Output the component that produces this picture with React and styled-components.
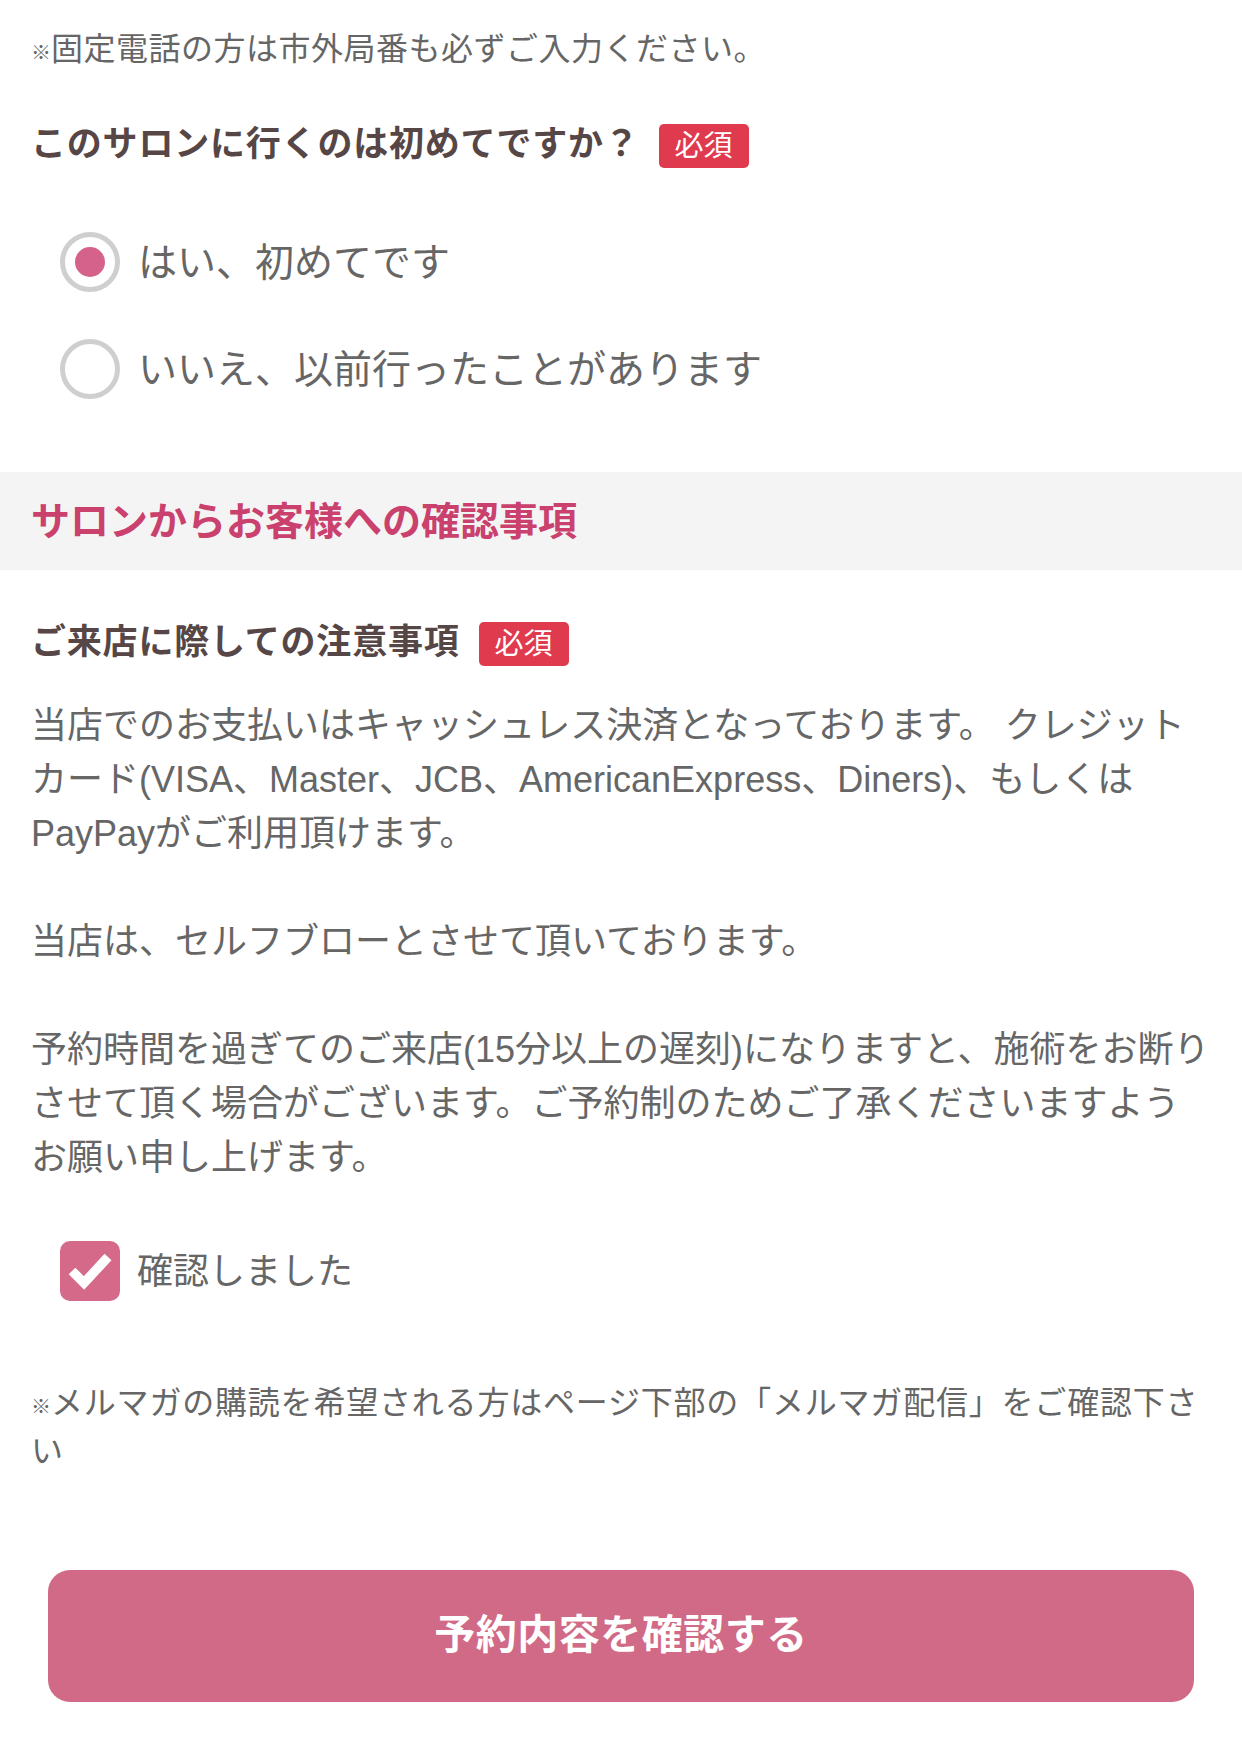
import React from 'react';
import styled, { createGlobalStyle } from 'styled-components';

const GlobalStyle = createGlobalStyle`
  html, body {
    margin: 0;
    padding: 0;
    background: #ffffff;
  }
  body {
    font-family: "Liberation Sans", "Noto Sans CJK JP", sans-serif;
    color: #666666;
  }
  * {
    box-sizing: border-box;
  }
`;

const Page = styled.div`
  width: 1242px;
  padding-bottom: 50px;
`;

const Section = styled.div`
  padding: 0 31px;
`;

const Note = styled.p`
  margin: ${(p) => p.$top || 0}px 0 0;
  font-size: 32px;
  line-height: 48px;
  letter-spacing: ${(p) => p.$spacing || 0.5}px;
  color: #666666;
  white-space: nowrap;
`;

// the reference mark is drawn small, like a latin glyph
const Mark = styled.span`
  font-size: 20px;
  line-height: 1;
  letter-spacing: 0;
`;

const QuestionRow = styled.div`
  display: flex;
  align-items: center;
  gap: 19px;
  height: 44px;
  margin-top: ${(p) => p.$top}px;
`;

const QuestionTitle = styled.h3`
  margin: 0;
  padding-bottom: 4px;
  font-size: 35px;
  line-height: 44px;
  letter-spacing: 0.8px;
  font-weight: 700;
  color: #574646;
`;

const Badge = styled.span`
  display: inline-flex;
  align-items: center;
  justify-content: center;
  height: 44px;
  padding: 0 16px;
  border-radius: 5px;
  background: #e03a4f;
  color: #ffffff;
  font-size: 29px;
  line-height: 1;
`;

const RadioList = styled.div`
  display: flex;
  flex-direction: column;
  gap: 47px;
  margin-top: 64px;
  padding-left: 29px;
`;

const OptionRow = styled.label`
  display: flex;
  align-items: center;
  gap: ${(p) => p.$gap || 18}px;
  height: 60px;
  font-size: ${(p) => p.$size || 39}px;
  color: #666666;
`;

const OptionText = styled.span`
  padding-bottom: 6px;
`;

const RadioCircle = styled.span`
  flex: none;
  display: flex;
  align-items: center;
  justify-content: center;
  width: 60px;
  height: 60px;
  border: 5px solid #cfcfcf;
  border-radius: 50%;
  background: #ffffff;

  &::after {
    content: '';
    width: 30px;
    height: 30px;
    border-radius: 50%;
    background: ${(p) => (p.$checked ? '#d4628a' : 'transparent')};
  }
`;

const Band = styled.div`
  display: flex;
  align-items: center;
  height: 98px;
  margin-top: 73px;
  padding: 0 31px 6px;
  background: #f4f4f4;
`;

const BandTitle = styled.h2`
  margin: 0;
  font-size: 39px;
  font-weight: 700;
  color: #c9416c;
`;

const Body = styled.div`
  margin-top: 33px;
  font-size: 36px;
  line-height: 54px;
  color: #666666;
  white-space: nowrap;
`;

const CheckRow = styled(OptionRow)`
  margin-top: 56px;
  padding-left: 29px;
`;

const CheckBox = styled.span`
  flex: none;
  display: flex;
  width: 60px;
  height: 60px;
  border-radius: 10px;
  background: #d4698a;
`;

const ButtonWrap = styled.div`
  margin-top: 95px;
  padding: 0 48px;
`;

const SubmitButton = styled.button`
  display: flex;
  align-items: center;
  justify-content: center;
  width: 100%;
  height: 132px;
  padding: 0 0 10px;
  border: none;
  border-radius: 22px;
  background: #d16a86;
  color: #ffffff;
  font-family: "Liberation Sans", "Noto Sans CJK JP", sans-serif;
  font-size: 41px;
  font-weight: 700;
  letter-spacing: 0.5px;
`;

const Check = () => (
  <svg width="60" height="60" viewBox="0 0 60 60">
    <path d="M12 30 L24 42 L48 16" fill="none" stroke="#ffffff" strokeWidth="9.5" />
  </svg>
);

export default function App() {
  return (
    <Page>
      <GlobalStyle />
      <Section>
        <Note $top={25}>
          <Mark>※</Mark>固定電話の方は市外局番も必ずご入力ください。
        </Note>
        <QuestionRow $top={51}>
          <QuestionTitle>このサロンに行くのは初めてですか？</QuestionTitle>
          <Badge>必須</Badge>
        </QuestionRow>
        <RadioList>
          <OptionRow>
            <RadioCircle $checked />
            <OptionText>はい、初めてです</OptionText>
          </OptionRow>
          <OptionRow>
            <RadioCircle />
            <OptionText>いいえ、以前行ったことがあります</OptionText>
          </OptionRow>
        </RadioList>
      </Section>

      <Band>
        <BandTitle>サロンからお客様への確認事項</BandTitle>
      </Band>

      <Section>
        <QuestionRow $top={52}>
          <QuestionTitle>ご来店に際しての注意事項</QuestionTitle>
          <Badge>必須</Badge>
        </QuestionRow>
        <Body>
          当店でのお支払いはキャッシュレス決済となっております。 クレジット
          <br />
          カード(VISA、Master、JCB、AmericanExpress、Diners)、もしくは
          <br />
          PayPayがご利用頂けます。
          <br />
          <br />
          当店は、セルフブローとさせて頂いております。
          <br />
          <br />
          予約時間を過ぎてのご来店(15分以上の遅刻)になりますと、施術をお断り
          <br />
          させて頂く場合がございます。ご予約制のためご了承くださいますよう
          <br />
          お願い申し上げます。
        </Body>
        <CheckRow $size={36} $gap={17}>
          <CheckBox>
            <Check />
          </CheckBox>
          <OptionText>確認しました</OptionText>
        </CheckRow>
        <Note $top={78} $spacing={0.8}>
          <Mark>※</Mark>メルマガの購読を希望される方はページ下部の「メルマガ配信」をご確認下さ
          <br />い
        </Note>
      </Section>

      <ButtonWrap>
        <SubmitButton type="button">予約内容を確認する</SubmitButton>
      </ButtonWrap>
    </Page>
  );
}
